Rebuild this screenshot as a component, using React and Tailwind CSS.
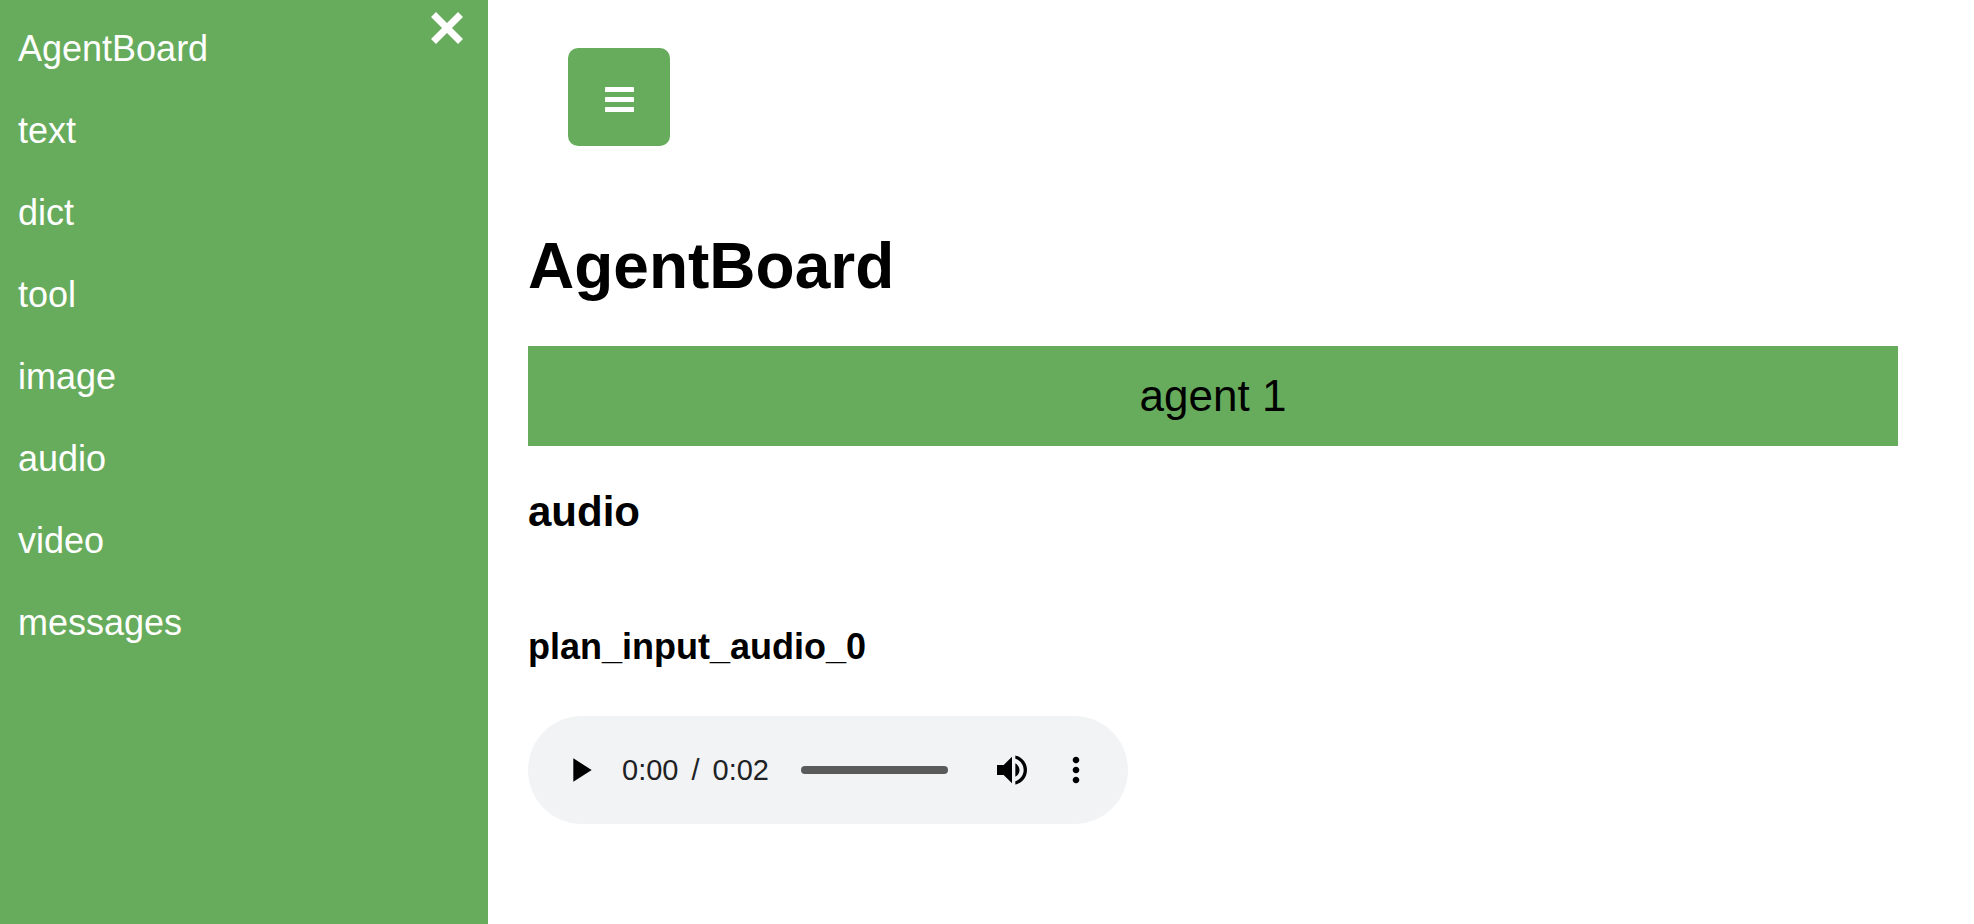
const links = ['AgentBoard', 'text', 'dict', 'tool', 'image', 'audio', 'video', 'messages'];

function Sidebar() {
  return (
    <aside className="relative w-[488px] shrink-0 bg-[#67ac5c] text-white">
      <nav className="flex flex-col gap-10 px-[18px] pt-7 text-[36px] leading-[42px]">
        {links.map((name) => (
          <a key={name} href={`#${name}`} className="block">
            {name}
          </a>
        ))}
      </nav>
      <button type="button" aria-label="Close menu" className="absolute top-3 right-[25px]">
        <svg className="block size-8" viewBox="0 0 32 32" stroke="currentColor" strokeWidth="7">
          <path d="M2.5 2.5 29.5 29.5M29.5 2.5 2.5 29.5" />
        </svg>
      </button>
    </aside>
  );
}

function AudioPlayer() {
  return (
    <div className="flex h-[108px] w-[600px] items-center rounded-full bg-[#f1f3f4] px-8 text-black">
      <button type="button" aria-label="Play">
        <svg className="block size-10" viewBox="0 0 24 24" fill="currentColor">
          <path d="M8 5v14l11-7z" />
        </svg>
      </button>
      <div className="ml-[22px] flex gap-[13px] text-[29px] leading-9 text-[#202124]">
        <span>0:00</span>
        <span>/</span>
        <span>0:02</span>
      </div>
      <input
        type="range"
        aria-label="Seek"
        min="0"
        max="2"
        defaultValue="0"
        className="ml-8 h-2 w-0 min-w-0 flex-1 appearance-none rounded-full bg-[#5a5a5a] [&::-webkit-slider-thumb]:w-0 [&::-webkit-slider-thumb]:appearance-none"
      />
      <button type="button" aria-label="Mute" className="ml-11">
        <svg className="block size-10" viewBox="0 0 24 24" fill="currentColor">
          <path d="M3 9v6h4l5 5V4L7 9H3zm13.5 3c0-1.77-1.02-3.29-2.5-4.03v8.05c1.48-.73 2.5-2.25 2.5-4.02zM14 3.23v2.06c2.89.86 5 3.54 5 6.71s-2.11 5.85-5 6.71v2.06c4.01-.91 7-4.49 7-8.77s-2.99-7.86-7-8.77z" />
        </svg>
      </button>
      <button type="button" aria-label="More options" className="ml-6">
        <svg className="block size-10" viewBox="0 0 24 24" fill="currentColor">
          <path d="M12 8c1.1 0 2-.9 2-2s-.9-2-2-2-2 .9-2 2 .9 2 2 2zm0 2c-1.1 0-2 .9-2 2s.9 2 2 2 2-.9 2-2-.9-2-2-2zm0 6c-1.1 0-2 .9-2 2s.9 2 2 2 2-.9 2-2-.9-2-2-2z" />
        </svg>
      </button>
    </div>
  );
}

export default function App() {
  return (
    <div className="flex min-h-screen bg-white font-['Liberation_Sans',Arial,sans-serif] text-black">
      <Sidebar />
      <main className="min-w-0 flex-1 pt-12 pr-[76px] pl-10">
        <button
          type="button"
          aria-label="Open menu"
          className="ml-10 flex h-[98px] w-[102px] items-center justify-center rounded-[10px] bg-[#67ac5c] pt-[5px] text-white"
        >
          <svg className="block h-[25px] w-[29px]" viewBox="0 0 29 25" fill="currentColor">
            <rect width="29" height="5" rx="0.5" />
            <rect y="10" width="29" height="5" rx="0.5" />
            <rect y="20" width="29" height="5" rx="0.5" />
          </svg>
        </button>
        <h1 className="mt-[84px] text-[64px] leading-[72px] font-bold">AgentBoard</h1>
        <div className="mt-11 bg-[#67ac5c] py-6 text-center text-[44px] leading-[52px]">agent 1</div>
        <h2 className="mt-[42px] text-[42px] leading-[48px] font-bold">audio</h2>
        <h3 className="mt-[90px] text-[36px] leading-[42px] font-bold">plan_input_audio_0</h3>
        <div className="mt-12">
          <AudioPlayer />
        </div>
      </main>
    </div>
  );
}
